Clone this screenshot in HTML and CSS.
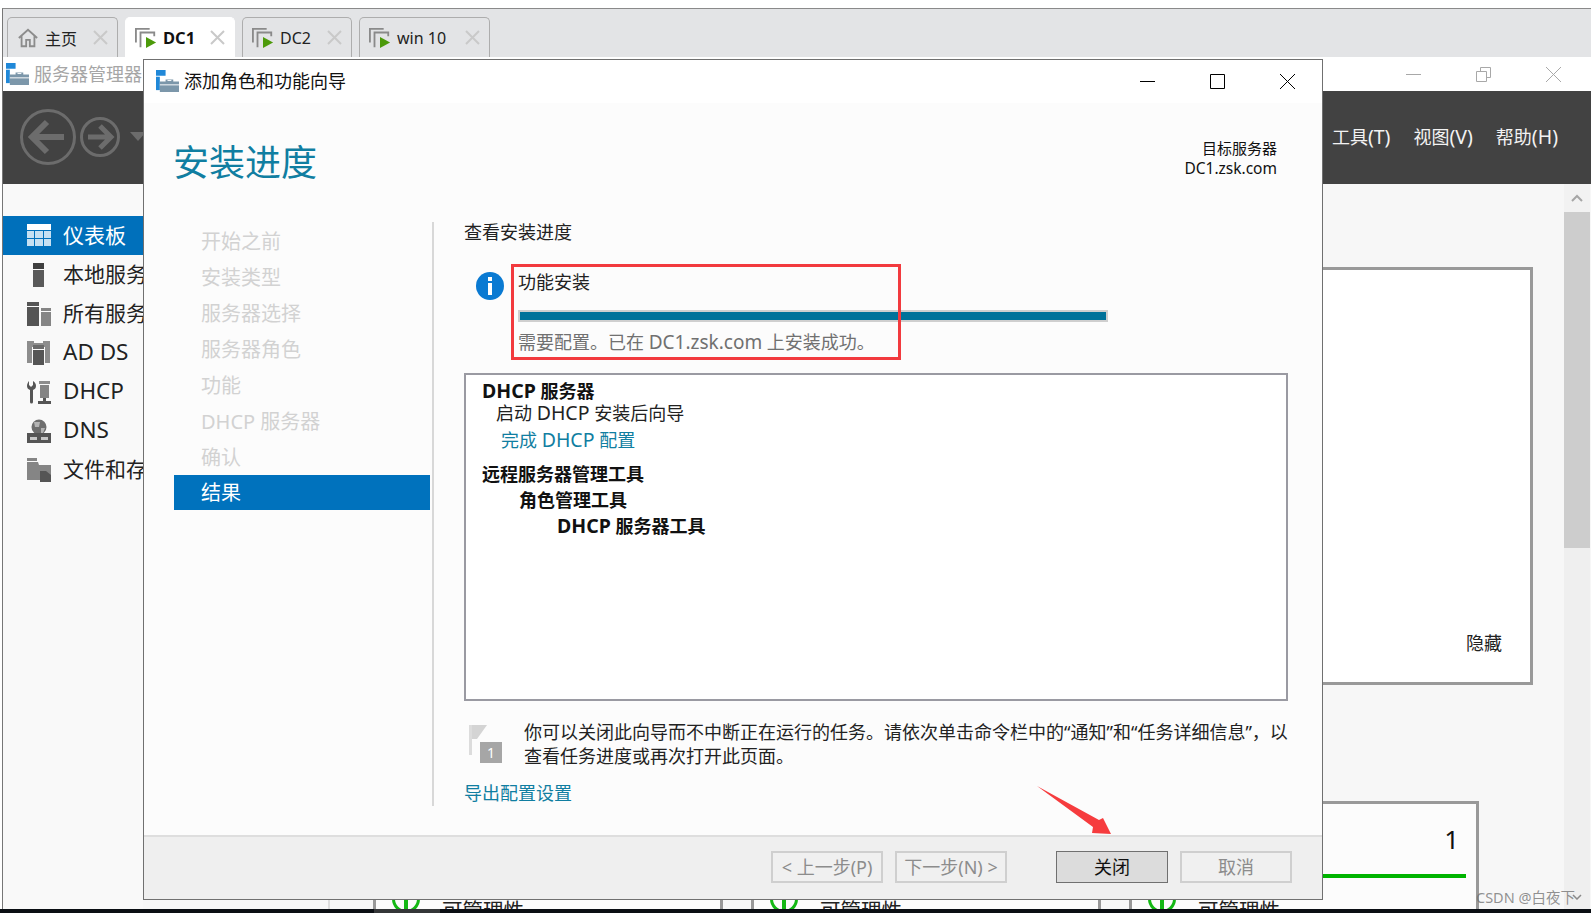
FILE: index.html

```html
<!DOCTYPE html>
<html lang="zh-CN">
<head>
    <meta charset="UTF-8">
    <title>添加角色和功能向导</title>
    <link rel="stylesheet" href="styles.css">
</head>
<body>
    <svg class="defs" width="0" height="0">
        <symbol id="i-manager" viewBox="0 0 24 24">
            <rect x="0" y="0" width="10" height="6" fill="#2088d8"/>
            <rect x="0" y="7" width="4" height="14" fill="#2088d8"/>
            <path d="M4 12h6v-2h8v2h6v11H4z" fill="#7c97aa"/>
            <path d="M4 15.5h20" stroke="#fff" stroke-width="1"/>
            <path d="M12 11h4" stroke="#fff" stroke-width="1"/>
        </symbol>
        <symbol id="i-vm" viewBox="0 0 24 24">
            <path d="M1 17V2h15" fill="none" stroke="#8a8a8a" stroke-width="2"/>
            <path d="M6 22V6h15v4" fill="none" stroke="#8a8a8a" stroke-width="2"/>
            <path d="M12 11l11 6-11 6z" fill="#4c9a0a"/>
        </symbol>
        <symbol id="i-home" viewBox="0 0 24 24">
            <path d="M2 12L12 3l10 9M5 10v11h5v-7h4v7h5V10" fill="none" stroke="#8c8c8c" stroke-width="2"/>
        </symbol>
        <symbol id="i-x" viewBox="0 0 15 15">
            <path d="M1 1l13 13M14 1L1 14" fill="none" stroke="#c9c9c9" stroke-width="2"/>
        </symbol>
        <symbol id="i-dash" viewBox="0 0 24 24">
            <rect x="0" y="0" width="24" height="6" fill="#fff"/>
            <path d="M0 7h7v7H0zM8 7h8v7H8zM17 7h7v7h-7zM0 15h7v7H0zM8 15h8v7H8zM17 15h7v7h-7z" fill="#c6e0f2"/>
        </symbol>
        <symbol id="i-local" viewBox="0 0 24 24">
            <rect x="6" y="0" width="11" height="6" fill="#3f3f3f"/>
            <rect x="6" y="7" width="11" height="17" fill="#5a5a5a"/>
        </symbol>
        <symbol id="i-all" viewBox="0 0 24 24">
            <path d="M0 0h12v4H0zM0 5h12v19H0z" fill="#555"/>
            <path d="M14 6h10v3H14zM14 10h10v14H14z" fill="#858585"/>
        </symbol>
        <symbol id="i-adds" viewBox="0 0 24 24">
            <path d="M0 0h7v2h9V0h7v22h-5V6H5v16H0z" fill="#8d8d8d"/>
            <path d="M6 4h11v4H6z" fill="#6a6a6a"/>
            <path d="M6 9h11v15H6z" fill="#555"/>
        </symbol>
        <symbol id="i-dhcp" viewBox="0 0 24 24">
            <path d="M2 1v4l2 2 2-2V1c2 1 3 3 3 5 0 2-1 3-3 4v12a1.500 1.500 0 0 1-3 0V10C1 9 0 8 0 6c0-2 1-4 2-5z" fill="#555"/>
            <path d="M12 1h11v3H12z" fill="#8d8d8d"/>
            <path d="M13 5h9v13h-9z" fill="#858585"/>
            <path d="M16 18h3v3h5v3H11v-3h5z" fill="#555"/>
        </symbol>
        <symbol id="i-dns" viewBox="0 0 24 24">
            <circle cx="12" cy="8" r="7.500" fill="#6e6e6e"/>
            <path d="M7 3h6l-1 5H8zM14 9h4l-2 5h-2z" fill="#b4b4b4"/>
            <path d="M0 14h24v10H0z" fill="#555"/>
            <path d="M3 18h7v3H3zM14 18h7v3h-7z" fill="#c8c8c8"/>
        </symbol>
        <symbol id="i-files" viewBox="0 0 24 24">
            <path d="M0 0h10v3H0zM0 4h11l1 3h12v15h-5v-8h-6v8H0z" fill="#858585"/>
            <path d="M13 13h6l5 4v7H13z" fill="#555"/>
        </symbol>
    </svg>

    <div class="vm-frame">
        <div class="vm-tabs">
            <div class="tab tab-home">
                <svg class="tab-icon"><use href="#i-home"/></svg>
                <span>主页</span>
                <svg class="tab-x"><use href="#i-x"/></svg>
            </div>
            <div class="tab tab-active">
                <svg class="tab-icon"><use href="#i-vm"/></svg>
                <span>DC1</span>
                <svg class="tab-x"><use href="#i-x"/></svg>
            </div>
            <div class="tab">
                <svg class="tab-icon"><use href="#i-vm"/></svg>
                <span>DC2</span>
                <svg class="tab-x"><use href="#i-x"/></svg>
            </div>
            <div class="tab tab-wide">
                <svg class="tab-icon"><use href="#i-vm"/></svg>
                <span>win 10</span>
                <svg class="tab-x"><use href="#i-x"/></svg>
            </div>
        </div>

        <div class="app-title">
            <div class="app-name">
                <svg class="title-icon"><use href="#i-manager"/></svg>
                <span>服务器管理器</span>
            </div>
            <div class="win-btns win-btns-dim">
                <svg class="win-btn" viewBox="0 0 15 15"><path d="M0 7.5h15"/></svg>
                <svg class="win-btn" viewBox="0 0 15 15"><path d="M.5 4.5h10v10H.5zM4.5 4V.5h10v10H11"/></svg>
                <svg class="win-btn" viewBox="0 0 15 15"><path d="M0 0l15 15M15 0L0 15"/></svg>
            </div>
        </div>

        <div class="app-toolbar">
            <div class="nav-arrows">
                <svg class="arrow-big" viewBox="0 0 56 56">
                    <circle cx="28" cy="28" r="26.5"/>
                    <path d="M12 28h32M27 13L12 28l15 15"/>
                </svg>
                <svg class="arrow-small" viewBox="0 0 40 40">
                    <circle cx="20" cy="20" r="18.5"/>
                    <path d="M8 20h23M20 9l11 11-11 11"/>
                </svg>
                <span class="arrow-drop"></span>
            </div>
            <div class="app-menu">
                <span>工具<span class="lat-menu">(T)</span></span>
                <span>视图<span class="lat-menu">(V)</span></span>
                <span>帮助<span class="lat-menu">(H)</span></span>
            </div>
        </div>

        <div class="app-body">
            <div class="side">
                <div class="side-row side-active"><svg class="side-icon"><use href="#i-dash"/></svg><span>仪表板</span></div>
                <div class="side-row"><svg class="side-icon"><use href="#i-local"/></svg><span>本地服务器</span></div>
                <div class="side-row"><svg class="side-icon"><use href="#i-all"/></svg><span>所有服务器</span></div>
                <div class="side-row side-lat"><svg class="side-icon"><use href="#i-adds"/></svg><span>AD DS</span></div>
                <div class="side-row side-lat"><svg class="side-icon"><use href="#i-dhcp"/></svg><span>DHCP</span></div>
                <div class="side-row side-lat"><svg class="side-icon"><use href="#i-dns"/></svg><span>DNS</span></div>
                <div class="side-row"><svg class="side-icon"><use href="#i-files"/></svg><span>文件和存储服务</span></div>
            </div>

            <div class="content">
                <div class="welcome-card">
                    <span class="hide-link">隐藏</span>
                </div>
                <div class="tiles">
                    <div class="tile-stub"></div>
                    <div class="tile">
                        <div class="tile-count">1</div>
                        <div class="tile-bar"></div>
                        <div class="tile-status"><span class="ok-dot"></span><span class="ok-text">可管理性</span></div>
                    </div>
                    <div class="tile">
                        <div class="tile-count">1</div>
                        <div class="tile-bar"></div>
                        <div class="tile-status"><span class="ok-dot"></span><span class="ok-text">可管理性</span></div>
                    </div>
                    <div class="tile">
                        <div class="tile-count">1</div>
                        <div class="tile-bar"></div>
                        <div class="tile-status"><span class="ok-dot"></span><span class="ok-text">可管理性</span></div>
                    </div>
                </div>
            </div>

            <div class="scrollbar">
                <div class="scroll-up"><svg viewBox="0 0 12 8"><path d="M1 7l5-5 5 5"/></svg></div>
                <div class="scroll-thumb"></div>
            </div>
        </div>
    </div>

    <div class="taskbar"><div class="task-item"></div></div>

    <!-- 向导窗口 -->
    <div class="dialog">
        <div class="dlg-title">
            <div class="dlg-name">
                <svg class="dlg-icon"><use href="#i-manager"/></svg>
                <span>添加角色和功能向导</span>
            </div>
            <div class="win-btns">
                <svg class="win-btn" viewBox="0 0 15 15"><path d="M0 7.5h15"/></svg>
                <svg class="win-btn" viewBox="0 0 15 15"><path d="M.5.5h14v14H.5z"/></svg>
                <svg class="win-btn" viewBox="0 0 15 15"><path d="M0 0l15 15M15 0L0 15"/></svg>
            </div>
        </div>

        <div class="dlg-body">
            <div class="dlg-head">
                <h1>安装进度</h1>
                <div class="target">目标服务器<br><span class="lat-target">DC1.zsk.com</span></div>
            </div>
            <div class="dlg-cols">
                <div class="steps">
                    <div class="step">开始之前</div>
                    <div class="step">安装类型</div>
                    <div class="step">服务器选择</div>
                    <div class="step">服务器角色</div>
                    <div class="step">功能</div>
                    <div class="step">DHCP 服务器</div>
                    <div class="step">确认</div>
                    <div class="step step-active">结果</div>
                </div>
                <div class="main">
                    <div class="line main-title">查看安装进度</div>
                    <div class="status">
                        <svg class="info-icon" viewBox="0 0 28 28">
                            <circle cx="14" cy="14" r="14" fill="#0a7ad2"/>
                            <rect x="12" y="5" width="4" height="4" fill="#fff"/>
                            <rect x="12" y="11" width="4" height="12" fill="#fff"/>
                        </svg>
                        <div class="status-text">
                            <div class="line">功能安装</div>
                            <div class="progress"><div class="progress-fill"></div></div>
                            <div class="line status-msg">需要配置。已在 <span class="lat-msg">DC1.zsk.com</span> 上安装成功。</div>
                        </div>
                        <div class="red-box"></div>
                    </div>
                    <div class="result">
                        <div class="line r-bold"><span class="lat">DHCP</span> 服务器</div>
                        <div class="line r-sub">启动 <span class="lat">DHCP</span> 安装后向导</div>
                        <div class="line r-link">完成 <span class="lat">DHCP</span> 配置</div>
                        <div class="line r-bold r-tools">远程服务器管理工具</div>
                        <div class="line r-bold r-lv1">角色管理工具</div>
                        <div class="line r-bold r-lv2"><span class="lat">DHCP</span> 服务器工具</div>
                    </div>
                    <div class="note">
                        <svg class="flag-icon" viewBox="0 0 33 38">
                            <path d="M0 0h3v30H0z" fill="#dcdcdc"/>
                            <path d="M3 0h15L8 14H3z" fill="#d4d4d4"/>
                            <rect x="11" y="17" width="22" height="21" fill="#a6a6a6"/>
                            <text x="22" y="33" class="flag-num">1</text>
                        </svg>
                        <p>你可以关闭此向导而不中断正在运行的任务。请依次单击命令栏中的“通知”和“任务详细信息”，以<br>查看任务进度或再次打开此页面。</p>
                    </div>
                    <a class="line export" href="#">导出配置设置</a>
                </div>
            </div>
        </div>

        <div class="dlg-foot">
            <button class="btn" disabled>&lt; 上一步(P)</button>
            <button class="btn" disabled>下一步(N) &gt;</button>
            <button class="btn btn-close">关闭</button>
            <button class="btn" disabled>取消</button>
        </div>
    </div>

    <svg class="red-arrow" viewBox="0 0 80 54">
        <path d="M1 1L63 35l4-2 8 16-19-1 1-6z" fill="#f63c3e"/>
    </svg>

    <div class="watermark">CSDN @白夜下<svg viewBox="0 0 10 6"><path d="M1 1l4 4 4-4"/></svg></div>
</body>
</html>
```

FILE: styles.css

```css
* {
    box-sizing: border-box;
}

body {
    margin: 0;
    width: 1591px;
    height: 913px;
    overflow: hidden;
    background-color: white;
    display: flex;
    flex-direction: column;
    font-family: "Noto Sans", "Noto Sans CJK SC", sans-serif;
    color: #222;
    position: relative;
}

.defs {
    position: absolute;
}

/* vm tabs */
.vm-frame {
    margin-top: 8px;
    margin-left: 2px;
    height: 901px;
    border-left: 1px solid #777;
    border-top: 1px solid #8a8a8a;
    display: flex;
    flex-direction: column;
    overflow: hidden;
}

.vm-tabs {
    height: 48px;
    flex: none;
    background-color: #e3e4e6;
    padding: 8px 0 0 4px;
    display: flex;
    gap: 7px;
}

.tab {
    width: 110px;
    height: 40px;
    display: flex;
    align-items: center;
    padding: 0 9px 0 9px;
    border: 1px solid #adadad;
    border-bottom: none;
    border-radius: 5px 5px 0 0;
    font-size: 16px;
    color: #222;
}

.tab-home {
    width: 111px;
}

.tab-active {
    background-color: white;
    border-color: white;
    font-weight: bold;
    font-size: 16.5px;
    color: #111;
}

.tab-wide {
    width: 131px;
}

.tab-icon {
    width: 22px;
    height: 22px;
    margin-right: 6px;
    flex: none;
}

.tab-x {
    width: 15px;
    height: 15px;
    margin-left: auto;
    flex: none;
}

/* server manager */
.app-title {
    height: 34px;
    flex: none;
    background-color: white;
    display: flex;
    justify-content: space-between;
    align-items: center;
    padding-right: 3px;
}

.app-name {
    display: flex;
    align-items: center;
    padding-left: 3px;
    font-size: 18px;
    color: #a6a6a6;
}

.app-name span {
    padding-bottom: 2px;
}

.title-icon {
    width: 23px;
    height: 23px;
    margin-right: 5px;
}

.win-btns {
    display: flex;
}

.win-btn {
    width: 15px;
    height: 15px;
    margin: 0 27.5px;
    fill: none;
    stroke: #000;
    stroke-width: 1;
    flex: none;
}

.win-btns-dim .win-btn {
    stroke: #a8a8a8;
}

.app-toolbar {
    height: 93px;
    flex: none;
    background-color: #424242;
    display: flex;
    justify-content: space-between;
    align-items: center;
    padding: 0 33px 0 17px;
}

.nav-arrows {
    display: flex;
    align-items: center;
    gap: 4px;
    padding-bottom: 2px;
}

.nav-arrows svg {
    fill: none;
    stroke: #6c6c6c;
}

.arrow-big {
    width: 56px;
    height: 56px;
    stroke-width: 3;
}

.arrow-big path {
    stroke-width: 6;
}

.arrow-small {
    width: 40px;
    height: 40px;
    stroke-width: 3;
}

.arrow-small path {
    stroke-width: 5;
}

.arrow-drop {
    width: 0;
    height: 0;
    margin-left: 6px;
    border-left: 8px solid transparent;
    border-right: 8px solid transparent;
    border-top: 9px solid #6c6c6c;
}

.app-menu {
    display: flex;
    gap: 23px;
    font-size: 18px;
    color: #f2f2f2;
    padding-bottom: 2px;
}

.lat-menu {
    font-size: 19.5px;
}

.app-body {
    flex: 1;
    display: flex;
    background-color: #f7f7f7;
    min-height: 0;
}

.side {
    width: 140px;
    flex: none;
    padding-top: 32px;
    background-color: #f9f9f9;
    overflow: hidden;
}

.side-row {
    height: 39px;
    display: flex;
    align-items: center;
    padding-left: 24px;
    font-size: 21px;
    white-space: nowrap;
}

.side-row span {
    padding-bottom: 4px;
}

.side-lat {
    font-size: 22.5px;
}

.side-lat span {
    padding-bottom: 2px;
}

.side-active {
    background-color: #0070bb;
    color: white;
}

.side-icon {
    width: 24px;
    height: 24px;
    margin-right: 12px;
    flex: none;
}

.content {
    flex: 1;
    padding: 83px 31px 0 0;
    display: flex;
    flex-direction: column;
    align-items: flex-end;
    min-width: 0;
}

.welcome-card {
    width: 900px;
    height: 418px;
    flex: none;
    background-color: white;
    border: 3px solid #999;
    display: flex;
    justify-content: flex-end;
    align-items: flex-end;
    padding: 0 28px 27px 0;
    font-size: 18px;
}

.tiles {
    margin-top: 116px;
    margin-right: 54px;
    display: flex;
    gap: 28px;
    flex: none;
}

.tile-stub {
    width: 40px;
    height: 109px;
    margin-right: 15px;
    border-right: 2px solid #ddd;
}

.tile {
    width: 350px;
    height: 109px;
    background-color: #fcfcfc;
    border: 3px solid #999;
    border-bottom: none;
    padding: 18px 10px 0 16px;
    overflow: hidden;
}

.tile-count {
    text-align: right;
    padding-right: 7px;
    font-size: 26px;
    line-height: 34px;
    color: #111;
}

.tile-bar {
    margin-top: 18px;
    height: 4px;
    background-color: #00b400;
}

.tile-status {
    margin-top: 7px;
    display: flex;
    align-items: flex-start;
}

.ok-dot {
    width: 28px;
    height: 28px;
    flex: none;
    border: 3px solid #14b814;
    border-radius: 50%;
    margin-right: 22px;
    position: relative;
}

.ok-dot::after {
    content: "";
    position: absolute;
    left: 9px;
    top: 9px;
    width: 4px;
    height: 14px;
    background-color: #14b814;
}

.ok-text {
    margin-top: 11px;
    font-size: 20.5px;
    line-height: 28px;
}

.scrollbar {
    width: 26px;
    flex: none;
    margin-left: 0;
    background-color: #efefef;
    margin-right: 1px;
}

.scroll-up {
    height: 28px;
    background-color: #f2f2f2;
    display: flex;
    align-items: center;
    justify-content: center;
}

.scroll-up svg {
    width: 12px;
    height: 8px;
    fill: none;
    stroke: #a6a6a6;
    stroke-width: 2;
}

.scroll-thumb {
    height: 336px;
    background-color: #cdcdcd;
}

.taskbar {
    height: 4px;
    flex: none;
    background-color: #0a0e13;
    padding-left: 374px;
}

.task-item {
    width: 66px;
    height: 4px;
    background-color: #343638;
}

/* wizard */
.dialog {
    position: absolute;
    left: 143px;
    top: 59px;
    width: 1180px;
    height: 841px;
    border: 1px solid #707070;
    background-color: #fcfcfc;
    display: flex;
    flex-direction: column;
}

.dlg-title {
    height: 43px;
    flex: none;
    background-color: white;
    display: flex;
    justify-content: space-between;
    align-items: center;
    padding-left: 12px;
}

.dlg-name {
    display: flex;
    align-items: center;
    font-size: 18px;
    color: #111;
}

.dlg-name span {
    padding-bottom: 4px;
}

.dlg-icon {
    width: 23px;
    height: 23px;
    margin-right: 5px;
}

.dlg-body {
    flex: 1;
    min-height: 0;
}

.dlg-head {
    height: 119px;
    display: flex;
    justify-content: space-between;
    padding: 0 45px 0 29px;
}

.dlg-head h1 {
    margin: 36px 0 0;
    font-size: 36px;
    font-weight: normal;
    line-height: 48px;
    color: #107ea1;
}

.target {
    margin-top: 35px;
    text-align: right;
    font-size: 15px;
    line-height: 20px;
    color: #111;
}

.lat-target {
    font-size: 15.5px;
}

.dlg-cols {
    display: flex;
    padding-left: 30px;
}

.steps {
    width: 258px;
    flex: none;
    padding-top: 1px;
}

.step {
    height: 36px;
    line-height: 38px;
    padding-left: 27px;
    font-size: 20px;
    color: #d2d2d2;
}

.step-active {
    width: 256px;
    height: 35px;
    line-height: 35px;
    background-color: #0072bd;
    color: white;
}

.main {
    width: 858px;
    height: 584px;
    border-left: 2px solid #d8d8d8;
    padding-left: 30px;
    font-size: 18px;
}

.line {
    height: 22px;
    line-height: 20px;
}

.lat {
    font-size: 19.5px;
}

.lat-msg {
    font-size: 19px;
}

.status {
    margin-top: 28px;
    display: flex;
    position: relative;
}

.info-icon {
    width: 28px;
    height: 28px;
    margin-left: 12px;
    margin-right: 14px;
    flex: none;
}

.status-text {
    width: 590px;
}

.progress {
    margin-top: 16px;
    height: 12px;
    border: 2px solid #cfcfcf;
}

.progress-fill {
    height: 100%;
    background-color: #00729a;
}

.status-msg {
    margin-top: 10px;
    color: #707070;
}

.red-box {
    position: absolute;
    left: 47px;
    top: -8px;
    width: 390px;
    height: 96px;
    border: 3px solid #f23a3e;
}

.result {
    margin-top: 19px;
    width: 824px;
    height: 328px;
    background-color: white;
    border: 2px solid #9a9aa2;
    padding: 6px 0 0 16px;
}

.r-bold {
    font-weight: bold;
    color: #111;
}

.r-sub {
    padding-left: 14px;
    height: 21px;
}

.r-link {
    margin-top: 6px;
    padding-left: 19px;
    color: #107ea1;
}

.r-tools {
    margin-top: 12px;
}

.r-lv1 {
    margin-top: 4px;
    padding-left: 37px;
}

.r-lv2 {
    margin-top: 4px;
    padding-left: 75px;
}

.note {
    margin-top: 20px;
    display: flex;
    height: 48px;
}

.flag-icon {
    width: 33px;
    height: 38px;
    margin: 4px 22px 0 5px;
    flex: none;
}

.flag-num {
    font-size: 14px;
    fill: white;
    text-anchor: middle;
}

.note p {
    margin: -1px 0 0;
    line-height: 24px;
    white-space: nowrap;
    font-size: 18px;
    color: #222;
}

.export {
    display: block;
    margin-top: 14px;
    color: #107ea1;
    text-decoration: none;
}

.dlg-foot {
    height: 64px;
    flex: none;
    background-color: #efefef;
    border-top: 2px solid #dedede;
    display: flex;
    align-items: flex-start;
    padding: 14px 30px 0 0;
    justify-content: flex-end;
    gap: 12px;
}

.btn {
    width: 112px;
    height: 32px;
    padding: 0 0 3px;
    font-family: inherit;
    font-size: 18px;
    color: #8c8c8c;
    background-color: #f0f0f0;
    border: 2px solid #cfcfcf;
}

.btn-close {
    margin-left: 37px;
    background-color: #dcdcdc;
    border: 1px solid #707070;
    color: #111;
}

.red-arrow {
    position: absolute;
    left: 1036px;
    top: 785px;
    width: 80px;
    height: 54px;
}

.watermark {
    position: absolute;
    left: 1476px;
    top: 887px;
    display: flex;
    align-items: center;
    font-size: 14.5px;
    line-height: 20px;
    color: rgba(110, 110, 110, 0.75);
    white-space: nowrap;
}

.watermark svg {
    width: 10px;
    height: 6px;
    margin-left: -3px;
    fill: none;
    stroke: #8a8a8a;
    stroke-width: 1.5;
}
```
